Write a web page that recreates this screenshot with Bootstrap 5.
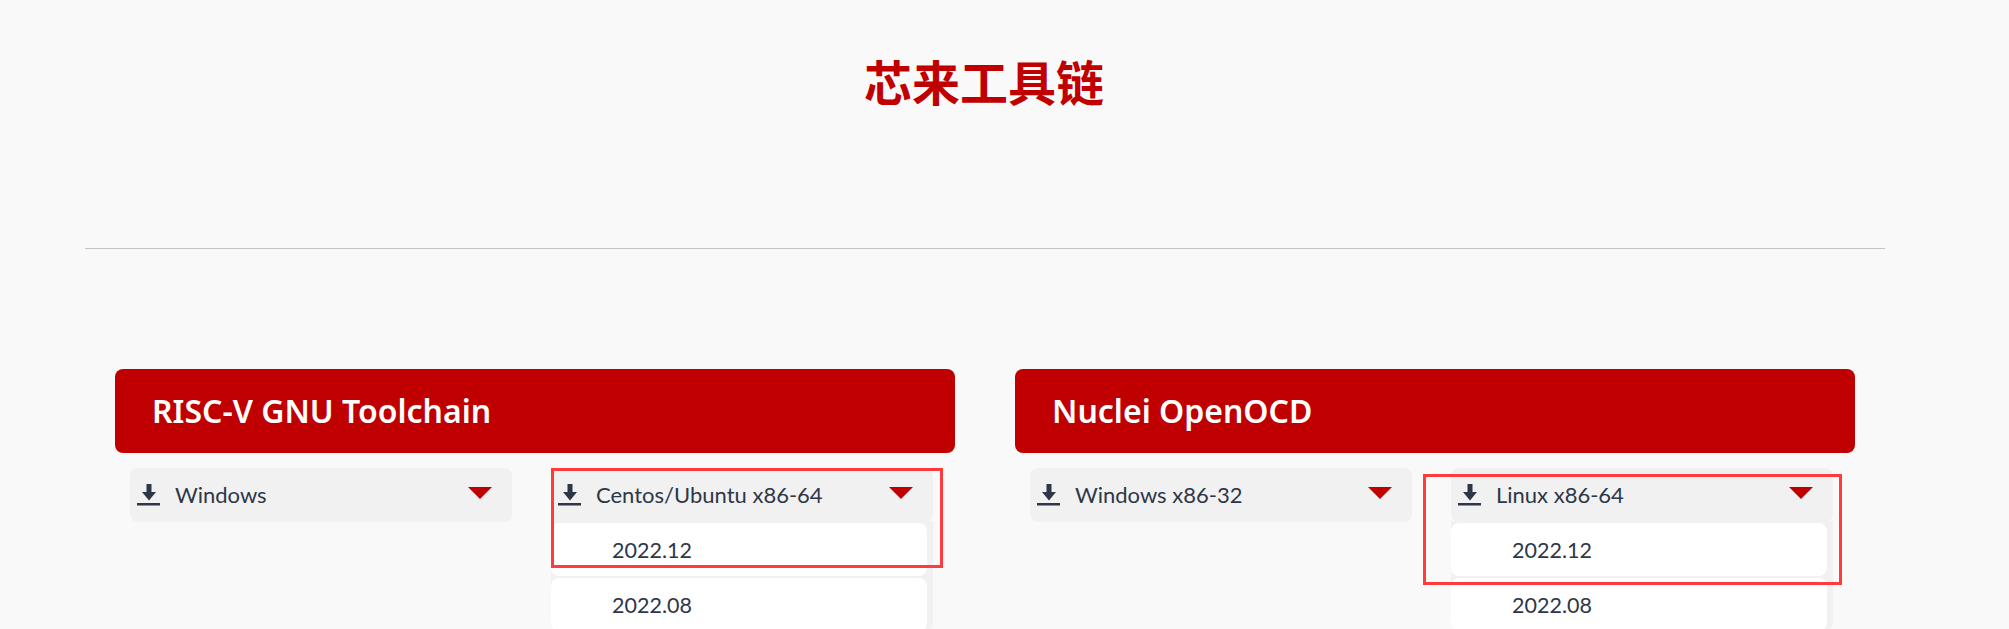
<!DOCTYPE html>
<html lang="zh-CN">
<head>
  <meta charset="UTF-8">
  <meta name="viewport" content="width=device-width, initial-scale=1">
  <title>芯来工具链</title>
  <link href="https://cdn.jsdelivr.net/npm/bootstrap@5.3.2/dist/css/bootstrap.min.css" rel="stylesheet">
  <style>
    html, body {
      height: 629px;
      overflow: hidden;
    }
    body {
      background: #f9f9f9;
      color: #2d3748;
      font-family: "Lato", "Noto Sans CJK SC", sans-serif;
    }
    .page-wrap {
      width: 1800px;
      margin-left: 85px;
    }
    .page-title {
      color: #c00000;
      font-family: "Noto Sans CJK SC", sans-serif;
      font-size: 48px;
      font-weight: 700;
      line-height: 64px;
      margin: 0;
      padding-top: 48px;
      height: 248px;
      padding-right: 2px;
    }
    .page-rule {
      border-top: 1px solid #c4c4c4;
      opacity: 1;
      margin: 0 0 120px;
    }
    .tool-col {
      width: 900px;
      padding: 0 30px;
    }
    .tool-head {
      background: #c00000;
      color: #fff;
      height: 84px;
      border-radius: 8px;
      padding-left: 37px;
      font-family: "Noto Sans", sans-serif;
      font-size: 32px;
      font-weight: 600;
      line-height: 84px;
      margin: 0 0 15px;
    }
    .os-grid {
      display: grid;
      grid-template-columns: 382px 382px;
      column-gap: 39px;
      padding-left: 15px;
    }
    .os-wrap {
      position: relative;
    }
    .os-btn {
      background: #f1f1f1;
      height: 54px;
      border-radius: 8px;
      padding: 0 20px 0 7px;
      font-size: 22px;
    }
    .os-btn span {
      margin-left: 15px;
      margin-top: -2px;
    }
    .dl-icon {
      width: 23px;
      height: 22px;
      margin-top: -1px;
    }
    .os-caret {
      width: 24px;
      height: 12px;
      margin-top: -4px;
    }
    .ver-list {
      background: #f1f1f1;
      padding: 2px 6px 0 0;
      border-radius: 0 0 8px 8px;
      margin-top: -1px;
    }
    .ver-item {
      background: #fff;
      height: 53px;
      border-radius: 8px;
      padding-left: 61px;
      margin-bottom: 2px;
      font-size: 21.5px;
      line-height: 54px;
    }
    .mark-box {
      position: absolute;
      border: 3px solid #ff3b3b;
      pointer-events: none;
    }
    .mark-one {
      left: 0;
      top: 0;
      width: 392px;
      height: 100px;
    }
    .mark-two {
      left: -28px;
      top: 6px;
      width: 419px;
      height: 111px;
    }
  </style>
</head>
<body>
  <div class="page-wrap">
    <h1 class="page-title text-center">芯来工具链</h1>
    <hr class="page-rule">
    <div class="d-flex">
      <div class="tool-col">
        <h2 class="tool-head">RISC-V GNU Toolchain</h2>
        <div class="os-grid">
          <div class="os-wrap">
            <div class="os-btn d-flex align-items-center">
              <svg class="dl-icon" viewBox="0 0 23 22" fill="#2d3748"><path d="M9.5 0h5v8h4.500l-7 8.500-7-8.500h4.500z"/><rect y="19" width="23" height="2.500"/></svg>
              <span>Windows</span>
              <svg class="os-caret ms-auto" viewBox="0 0 24 12" fill="#c00000"><path d="M0 0h24L12 12z"/></svg>
            </div>
          </div>
          <div class="os-wrap">
            <div class="os-btn d-flex align-items-center">
              <svg class="dl-icon" viewBox="0 0 23 22" fill="#2d3748"><path d="M9.5 0h5v8h4.500l-7 8.500-7-8.500h4.500z"/><rect y="19" width="23" height="2.500"/></svg>
              <span>Centos/Ubuntu x86-64</span>
              <svg class="os-caret ms-auto" viewBox="0 0 24 12" fill="#c00000"><path d="M0 0h24L12 12z"/></svg>
            </div>
            <div class="ver-list">
              <div class="ver-item">2022.12</div>
              <div class="ver-item">2022.08</div>
            </div>
            <div class="mark-box mark-one"></div>
          </div>
        </div>
      </div>
      <div class="tool-col">
        <h2 class="tool-head">Nuclei OpenOCD</h2>
        <div class="os-grid">
          <div class="os-wrap">
            <div class="os-btn d-flex align-items-center">
              <svg class="dl-icon" viewBox="0 0 23 22" fill="#2d3748"><path d="M9.5 0h5v8h4.500l-7 8.500-7-8.500h4.500z"/><rect y="19" width="23" height="2.500"/></svg>
              <span>Windows x86-32</span>
              <svg class="os-caret ms-auto" viewBox="0 0 24 12" fill="#c00000"><path d="M0 0h24L12 12z"/></svg>
            </div>
          </div>
          <div class="os-wrap">
            <div class="os-btn d-flex align-items-center">
              <svg class="dl-icon" viewBox="0 0 23 22" fill="#2d3748"><path d="M9.5 0h5v8h4.500l-7 8.500-7-8.500h4.500z"/><rect y="19" width="23" height="2.500"/></svg>
              <span>Linux x86-64</span>
              <svg class="os-caret ms-auto" viewBox="0 0 24 12" fill="#c00000"><path d="M0 0h24L12 12z"/></svg>
            </div>
            <div class="ver-list">
              <div class="ver-item">2022.12</div>
              <div class="ver-item">2022.08</div>
            </div>
            <div class="mark-box mark-two"></div>
          </div>
        </div>
      </div>
    </div>
  </div>
  <script src="https://cdn.jsdelivr.net/npm/bootstrap@5.3.2/dist/js/bootstrap.bundle.min.js"></script>
</body>
</html>
